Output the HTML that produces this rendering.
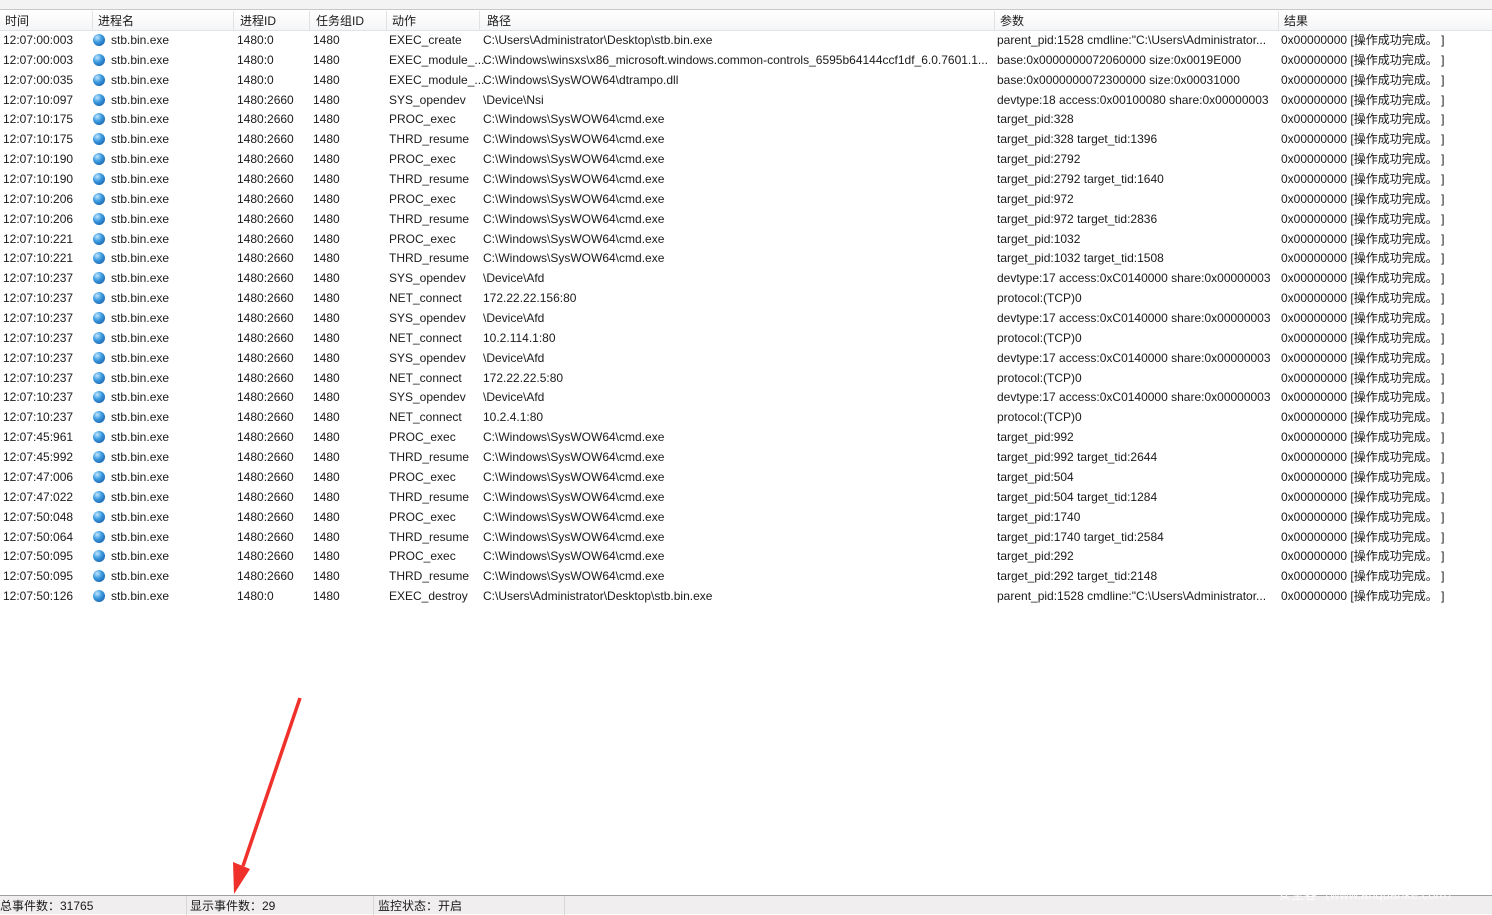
<!DOCTYPE html>
<html><head><meta charset="utf-8"><style>
*{margin:0;padding:0;box-sizing:border-box}
body{width:1492px;height:914px;background:#fff;position:relative;overflow:hidden;font-family:"Liberation Sans","Noto Sans CJK SC",sans-serif;font-size:12px;color:#1a1a1a}
.top{position:absolute;left:0;top:0;width:1492px;height:10px;background:#f3f3f3;border-bottom:1px solid #c8c8c8}
.hdr{position:absolute;left:0;top:11px;width:1492px;height:20px;background:linear-gradient(#fff,#f4f5f7);border-bottom:1px solid #e3e3e3}
.hdr span{position:absolute;top:3px;font-size:12px;line-height:14px}
.hdr i{position:absolute;top:0;width:1px;height:20px;background:#e2e2e2}
.r{position:absolute;left:0;height:20px;width:1492px;white-space:nowrap}
.r span{position:absolute;top:3px;line-height:14px;height:14px}
.ic{position:absolute;left:93px;top:4px;width:12px;height:12px;border-radius:50%;background:radial-gradient(circle at 35% 30%,#bfe6ff 0,#3d9be0 40%,#0b4e9a 100%)}
.c1{left:3px}.c2{left:111px}.c3{left:237px}.c4{left:313px}.c5{left:389px}.c6{left:483px}.c7{left:997px}.c8{left:1281px}
.sb{position:absolute;left:0;top:895px;width:1492px;height:19px;background:#f0eeee;border-top:1px solid #a0a0a0}
.sb span{position:absolute;top:3px;font-size:12px;line-height:14px}
.sb i{position:absolute;top:0;width:1px;height:19px;background:#d8d8d8}
.wm{position:absolute;left:1278px;top:887px;color:#fff;font-size:13px;line-height:15px;opacity:.9}
</style></head><body>
<div class="top"></div>
<div class="hdr">
<span style="left:5px">时间</span><i style="left:92px"></i>
<span style="left:98px">进程名</span><i style="left:233px"></i>
<span style="left:240px">进程ID</span><i style="left:309px"></i>
<span style="left:316px">任务组ID</span><i style="left:386px"></i>
<span style="left:392px">动作</span><i style="left:479px"></i>
<span style="left:487px">路径</span><i style="left:994px"></i>
<span style="left:1000px">参数</span><i style="left:1278px"></i>
<span style="left:1284px">结果</span>
</div>
<div style="position:absolute;left:0;top:30px">
<div class="r" style="top:0px"><span class="c1">12:07:00:003</span><b class="ic"></b><span class="c2">stb.bin.exe</span><span class="c3">1480:0</span><span class="c4">1480</span><span class="c5">EXEC_create</span><span class="c6">C:\Users\Administrator\Desktop\stb.bin.exe</span><span class="c7">parent_pid:1528 cmdline:"C:\Users\Administrator...</span><span class="c8">0x00000000 [操作成功完成。 ]</span></div>
<div class="r" style="top:19.86px"><span class="c1">12:07:00:003</span><b class="ic"></b><span class="c2">stb.bin.exe</span><span class="c3">1480:0</span><span class="c4">1480</span><span class="c5">EXEC_module_...</span><span class="c6">C:\Windows\winsxs\x86_microsoft.windows.common-controls_6595b64144ccf1df_6.0.7601.1...</span><span class="c7">base:0x0000000072060000 size:0x0019E000</span><span class="c8">0x00000000 [操作成功完成。 ]</span></div>
<div class="r" style="top:39.72px"><span class="c1">12:07:00:035</span><b class="ic"></b><span class="c2">stb.bin.exe</span><span class="c3">1480:0</span><span class="c4">1480</span><span class="c5">EXEC_module_...</span><span class="c6">C:\Windows\SysWOW64\dtrampo.dll</span><span class="c7">base:0x0000000072300000 size:0x00031000</span><span class="c8">0x00000000 [操作成功完成。 ]</span></div>
<div class="r" style="top:59.58px"><span class="c1">12:07:10:097</span><b class="ic"></b><span class="c2">stb.bin.exe</span><span class="c3">1480:2660</span><span class="c4">1480</span><span class="c5">SYS_opendev</span><span class="c6">\Device\Nsi</span><span class="c7">devtype:18 access:0x00100080 share:0x00000003</span><span class="c8">0x00000000 [操作成功完成。 ]</span></div>
<div class="r" style="top:79.44px"><span class="c1">12:07:10:175</span><b class="ic"></b><span class="c2">stb.bin.exe</span><span class="c3">1480:2660</span><span class="c4">1480</span><span class="c5">PROC_exec</span><span class="c6">C:\Windows\SysWOW64\cmd.exe</span><span class="c7">target_pid:328</span><span class="c8">0x00000000 [操作成功完成。 ]</span></div>
<div class="r" style="top:99.3px"><span class="c1">12:07:10:175</span><b class="ic"></b><span class="c2">stb.bin.exe</span><span class="c3">1480:2660</span><span class="c4">1480</span><span class="c5">THRD_resume</span><span class="c6">C:\Windows\SysWOW64\cmd.exe</span><span class="c7">target_pid:328 target_tid:1396</span><span class="c8">0x00000000 [操作成功完成。 ]</span></div>
<div class="r" style="top:119.16px"><span class="c1">12:07:10:190</span><b class="ic"></b><span class="c2">stb.bin.exe</span><span class="c3">1480:2660</span><span class="c4">1480</span><span class="c5">PROC_exec</span><span class="c6">C:\Windows\SysWOW64\cmd.exe</span><span class="c7">target_pid:2792</span><span class="c8">0x00000000 [操作成功完成。 ]</span></div>
<div class="r" style="top:139.02px"><span class="c1">12:07:10:190</span><b class="ic"></b><span class="c2">stb.bin.exe</span><span class="c3">1480:2660</span><span class="c4">1480</span><span class="c5">THRD_resume</span><span class="c6">C:\Windows\SysWOW64\cmd.exe</span><span class="c7">target_pid:2792 target_tid:1640</span><span class="c8">0x00000000 [操作成功完成。 ]</span></div>
<div class="r" style="top:158.88px"><span class="c1">12:07:10:206</span><b class="ic"></b><span class="c2">stb.bin.exe</span><span class="c3">1480:2660</span><span class="c4">1480</span><span class="c5">PROC_exec</span><span class="c6">C:\Windows\SysWOW64\cmd.exe</span><span class="c7">target_pid:972</span><span class="c8">0x00000000 [操作成功完成。 ]</span></div>
<div class="r" style="top:178.74px"><span class="c1">12:07:10:206</span><b class="ic"></b><span class="c2">stb.bin.exe</span><span class="c3">1480:2660</span><span class="c4">1480</span><span class="c5">THRD_resume</span><span class="c6">C:\Windows\SysWOW64\cmd.exe</span><span class="c7">target_pid:972 target_tid:2836</span><span class="c8">0x00000000 [操作成功完成。 ]</span></div>
<div class="r" style="top:198.6px"><span class="c1">12:07:10:221</span><b class="ic"></b><span class="c2">stb.bin.exe</span><span class="c3">1480:2660</span><span class="c4">1480</span><span class="c5">PROC_exec</span><span class="c6">C:\Windows\SysWOW64\cmd.exe</span><span class="c7">target_pid:1032</span><span class="c8">0x00000000 [操作成功完成。 ]</span></div>
<div class="r" style="top:218.46px"><span class="c1">12:07:10:221</span><b class="ic"></b><span class="c2">stb.bin.exe</span><span class="c3">1480:2660</span><span class="c4">1480</span><span class="c5">THRD_resume</span><span class="c6">C:\Windows\SysWOW64\cmd.exe</span><span class="c7">target_pid:1032 target_tid:1508</span><span class="c8">0x00000000 [操作成功完成。 ]</span></div>
<div class="r" style="top:238.32px"><span class="c1">12:07:10:237</span><b class="ic"></b><span class="c2">stb.bin.exe</span><span class="c3">1480:2660</span><span class="c4">1480</span><span class="c5">SYS_opendev</span><span class="c6">\Device\Afd</span><span class="c7">devtype:17 access:0xC0140000 share:0x00000003</span><span class="c8">0x00000000 [操作成功完成。 ]</span></div>
<div class="r" style="top:258.18px"><span class="c1">12:07:10:237</span><b class="ic"></b><span class="c2">stb.bin.exe</span><span class="c3">1480:2660</span><span class="c4">1480</span><span class="c5">NET_connect</span><span class="c6">172.22.22.156:80</span><span class="c7">protocol:(TCP)0</span><span class="c8">0x00000000 [操作成功完成。 ]</span></div>
<div class="r" style="top:278.04px"><span class="c1">12:07:10:237</span><b class="ic"></b><span class="c2">stb.bin.exe</span><span class="c3">1480:2660</span><span class="c4">1480</span><span class="c5">SYS_opendev</span><span class="c6">\Device\Afd</span><span class="c7">devtype:17 access:0xC0140000 share:0x00000003</span><span class="c8">0x00000000 [操作成功完成。 ]</span></div>
<div class="r" style="top:297.9px"><span class="c1">12:07:10:237</span><b class="ic"></b><span class="c2">stb.bin.exe</span><span class="c3">1480:2660</span><span class="c4">1480</span><span class="c5">NET_connect</span><span class="c6">10.2.114.1:80</span><span class="c7">protocol:(TCP)0</span><span class="c8">0x00000000 [操作成功完成。 ]</span></div>
<div class="r" style="top:317.76px"><span class="c1">12:07:10:237</span><b class="ic"></b><span class="c2">stb.bin.exe</span><span class="c3">1480:2660</span><span class="c4">1480</span><span class="c5">SYS_opendev</span><span class="c6">\Device\Afd</span><span class="c7">devtype:17 access:0xC0140000 share:0x00000003</span><span class="c8">0x00000000 [操作成功完成。 ]</span></div>
<div class="r" style="top:337.62px"><span class="c1">12:07:10:237</span><b class="ic"></b><span class="c2">stb.bin.exe</span><span class="c3">1480:2660</span><span class="c4">1480</span><span class="c5">NET_connect</span><span class="c6">172.22.22.5:80</span><span class="c7">protocol:(TCP)0</span><span class="c8">0x00000000 [操作成功完成。 ]</span></div>
<div class="r" style="top:357.48px"><span class="c1">12:07:10:237</span><b class="ic"></b><span class="c2">stb.bin.exe</span><span class="c3">1480:2660</span><span class="c4">1480</span><span class="c5">SYS_opendev</span><span class="c6">\Device\Afd</span><span class="c7">devtype:17 access:0xC0140000 share:0x00000003</span><span class="c8">0x00000000 [操作成功完成。 ]</span></div>
<div class="r" style="top:377.34px"><span class="c1">12:07:10:237</span><b class="ic"></b><span class="c2">stb.bin.exe</span><span class="c3">1480:2660</span><span class="c4">1480</span><span class="c5">NET_connect</span><span class="c6">10.2.4.1:80</span><span class="c7">protocol:(TCP)0</span><span class="c8">0x00000000 [操作成功完成。 ]</span></div>
<div class="r" style="top:397.2px"><span class="c1">12:07:45:961</span><b class="ic"></b><span class="c2">stb.bin.exe</span><span class="c3">1480:2660</span><span class="c4">1480</span><span class="c5">PROC_exec</span><span class="c6">C:\Windows\SysWOW64\cmd.exe</span><span class="c7">target_pid:992</span><span class="c8">0x00000000 [操作成功完成。 ]</span></div>
<div class="r" style="top:417.06px"><span class="c1">12:07:45:992</span><b class="ic"></b><span class="c2">stb.bin.exe</span><span class="c3">1480:2660</span><span class="c4">1480</span><span class="c5">THRD_resume</span><span class="c6">C:\Windows\SysWOW64\cmd.exe</span><span class="c7">target_pid:992 target_tid:2644</span><span class="c8">0x00000000 [操作成功完成。 ]</span></div>
<div class="r" style="top:436.92px"><span class="c1">12:07:47:006</span><b class="ic"></b><span class="c2">stb.bin.exe</span><span class="c3">1480:2660</span><span class="c4">1480</span><span class="c5">PROC_exec</span><span class="c6">C:\Windows\SysWOW64\cmd.exe</span><span class="c7">target_pid:504</span><span class="c8">0x00000000 [操作成功完成。 ]</span></div>
<div class="r" style="top:456.78px"><span class="c1">12:07:47:022</span><b class="ic"></b><span class="c2">stb.bin.exe</span><span class="c3">1480:2660</span><span class="c4">1480</span><span class="c5">THRD_resume</span><span class="c6">C:\Windows\SysWOW64\cmd.exe</span><span class="c7">target_pid:504 target_tid:1284</span><span class="c8">0x00000000 [操作成功完成。 ]</span></div>
<div class="r" style="top:476.64px"><span class="c1">12:07:50:048</span><b class="ic"></b><span class="c2">stb.bin.exe</span><span class="c3">1480:2660</span><span class="c4">1480</span><span class="c5">PROC_exec</span><span class="c6">C:\Windows\SysWOW64\cmd.exe</span><span class="c7">target_pid:1740</span><span class="c8">0x00000000 [操作成功完成。 ]</span></div>
<div class="r" style="top:496.5px"><span class="c1">12:07:50:064</span><b class="ic"></b><span class="c2">stb.bin.exe</span><span class="c3">1480:2660</span><span class="c4">1480</span><span class="c5">THRD_resume</span><span class="c6">C:\Windows\SysWOW64\cmd.exe</span><span class="c7">target_pid:1740 target_tid:2584</span><span class="c8">0x00000000 [操作成功完成。 ]</span></div>
<div class="r" style="top:516.36px"><span class="c1">12:07:50:095</span><b class="ic"></b><span class="c2">stb.bin.exe</span><span class="c3">1480:2660</span><span class="c4">1480</span><span class="c5">PROC_exec</span><span class="c6">C:\Windows\SysWOW64\cmd.exe</span><span class="c7">target_pid:292</span><span class="c8">0x00000000 [操作成功完成。 ]</span></div>
<div class="r" style="top:536.22px"><span class="c1">12:07:50:095</span><b class="ic"></b><span class="c2">stb.bin.exe</span><span class="c3">1480:2660</span><span class="c4">1480</span><span class="c5">THRD_resume</span><span class="c6">C:\Windows\SysWOW64\cmd.exe</span><span class="c7">target_pid:292 target_tid:2148</span><span class="c8">0x00000000 [操作成功完成。 ]</span></div>
<div class="r" style="top:556.08px"><span class="c1">12:07:50:126</span><b class="ic"></b><span class="c2">stb.bin.exe</span><span class="c3">1480:0</span><span class="c4">1480</span><span class="c5">EXEC_destroy</span><span class="c6">C:\Users\Administrator\Desktop\stb.bin.exe</span><span class="c7">parent_pid:1528 cmdline:"C:\Users\Administrator...</span><span class="c8">0x00000000 [操作成功完成。 ]</span></div>
</div>
<svg style="position:absolute;left:0;top:0" width="1492" height="914"><path d="M300 698 L243 866" stroke="#f0302a" stroke-width="3.5" fill="none"/><path d="M233 862 L250 869 L234 894 Z" fill="#f0302a"/></svg>
<div class="sb">
<span style="left:0px">总事件数：31765</span><i style="left:186px"></i>
<span style="left:190px">显示事件数：29</span><i style="left:373px"></i>
<span style="left:378px">监控状态：开启</span><i style="left:564px"></i>
</div>
<div class="wm">安全客（www.anquanke.com）</div>
</body></html>
